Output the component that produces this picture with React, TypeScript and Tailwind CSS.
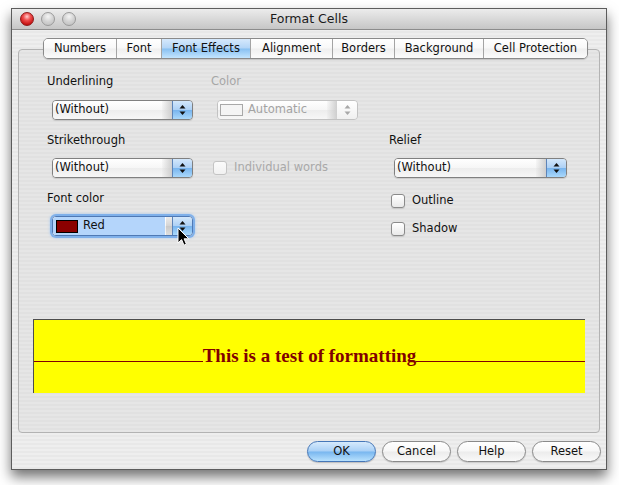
import React from "react";

function Arrows({ disabled }: { disabled?: boolean }) {
  const c = disabled ? "#a8a8a8" : "#111111";
  return (
    <svg width="7" height="12" viewBox="0 0 7 12">
      <path d="M3.5 1 L6.5 4.5 L0.5 4.5 Z" fill={c} />
      <path d="M3.5 11 L6.5 7.5 L0.5 7.5 Z" fill={c} />
    </svg>
  );
}

function Popup({
  className,
  children,
  disabled,
  focused,
}: {
  className: string;
  children: React.ReactNode;
  disabled?: boolean;
  focused?: boolean;
}) {
  return (
    <div
      className={`${className} flex h-[20px] rounded-[4px] border overflow-hidden ${
        disabled ? "border-[#c2c2c2]" : focused ? "border-[#4f79b4]" : "border-[#808080]"
      } ${
        focused
          ? "shadow-[0_0_0_2px_#7fb0ea,0_0_3px_2px_#a6c9f1]"
          : disabled
          ? ""
          : "shadow-[0_1px_1px_rgba(0,0,0,0.12)]"
      }`}
    >
      <div className="flex-1 min-w-0 flex items-center bg-[linear-gradient(to_bottom,#ffffff_0%,#f6f6f6_50%,#ededed_51%,#f7f7f7_100%)]">
        {children}
        <div
          className={`ml-auto h-full shrink-0 ${
            focused
              ? "w-[6px] bg-[linear-gradient(to_bottom,#ececec,#d4d4d4_50%,#c9c9c9_51%,#dedede)]"
              : "w-[10px] bg-[linear-gradient(to_right,rgba(225,225,225,0.2),rgba(200,200,200,0.85))]"
          }`}
        />
      </div>
      {disabled ? (
        <div className="w-[20px] flex items-center justify-center bg-[linear-gradient(to_bottom,#ffffff,#f0f0f0)]">
          <Arrows disabled />
        </div>
      ) : (
        <div className="w-[20px] flex items-center justify-center border-l border-[#5d84b8] bg-[linear-gradient(to_bottom,#d3e7fb_0%,#aed1f5_48%,#79b5ee_52%,#a9d8fb_100%)]">
          <Arrows />
        </div>
      )}
    </div>
  );
}

function Check({ label, disabled }: { label: string; disabled?: boolean }) {
  return (
    <div className="flex items-center h-[20px] gap-[7px]">
      <div
        className={`w-[14px] h-[14px] rounded-[3px] border ${
          disabled
            ? "border-[#c4c4c4] bg-[linear-gradient(to_bottom,#fbfbfb,#f1f1f1)]"
            : "border-[#8a8a8a] bg-[linear-gradient(to_bottom,#ffffff,#e9e9e9)] shadow-[0_1px_1px_rgba(0,0,0,0.12)]"
        }`}
      />
      <span className={disabled ? "text-[#a9a9a9]" : "text-[#111]"}>{label}</span>
    </div>
  );
}

function Label({ children, disabled }: { children: React.ReactNode; disabled?: boolean }) {
  return (
    <div className={`h-[18px] leading-[18px] ${disabled ? "text-[#a6a6a6]" : "text-[#111]"}`}>
      {children}
    </div>
  );
}

const tabs: { name: string; w: string; sel?: boolean }[] = [
  { name: "Numbers", w: "w-[72px]" },
  { name: "Font", w: "w-[45px]" },
  { name: "Font Effects", w: "w-[89px]", sel: true },
  { name: "Alignment", w: "w-[82px]" },
  { name: "Borders", w: "w-[62px]" },
  { name: "Background", w: "w-[89px]" },
  { name: "Cell Protection", w: "w-[104px]" },
];

function Button({ children, primary }: { children: React.ReactNode; primary?: boolean }) {
  return (
    <div
      className={`w-[69px] h-[21px] rounded-full border flex items-center justify-center text-[#111] ${
        primary
          ? "border-[#4677b8] bg-[linear-gradient(to_bottom,#d6eafc_0%,#a9d0f6_48%,#78b6ef_52%,#b8e1fd_100%)] shadow-[0_1px_1px_rgba(0,0,0,0.2)]"
          : "border-[#8a8a8a] bg-[linear-gradient(to_bottom,#ffffff_0%,#f7f7f7_48%,#ececec_52%,#f9f9f9_100%)] shadow-[0_1px_1px_rgba(0,0,0,0.15)]"
      }`}
    >
      {children}
    </div>
  );
}

export default function App() {
  return (
    <div className="w-[619px] h-[485px] bg-white pt-[8px] pl-[11px] font-['DejaVu_Sans',sans-serif] text-[11.5px] text-[#111]">
      <div className="w-[596px] h-[462px] border border-[#5c5c5c] flex flex-col shadow-[0_7px_12px_rgba(0,0,0,0.55)] bg-[repeating-linear-gradient(to_bottom,#eeeeee_0px,#eeeeee_2px,#e8e8e8_2px,#e8e8e8_4px)]">
        {/* Title bar */}
        <div className="h-[21px] shrink-0 grid grid-cols-[1fr_auto_1fr] items-center bg-[linear-gradient(to_bottom,#ececec,#c6c6c6)] border-b border-[#8c8c8c]">
          <div className="flex items-center gap-[7px] pl-[8px]">
            <div className="w-[14px] h-[14px] rounded-full border border-[#8e1a1a] bg-[radial-gradient(circle_at_50%_30%,#ffd0d0_0%,#f05050_35%,#c71414_75%,#a00c0c_100%)]" />
            <div className="w-[14px] h-[14px] rounded-full border border-[#9a9a9a] bg-[radial-gradient(circle_at_50%_30%,#f4f4f4_0%,#d2d2d2_50%,#bcbcbc_100%)]" />
            <div className="w-[14px] h-[14px] rounded-full border border-[#9a9a9a] bg-[radial-gradient(circle_at_50%_30%,#f4f4f4_0%,#d2d2d2_50%,#bcbcbc_100%)]" />
          </div>
          <div className="text-[12.5px] text-[#1a1a1a] pt-[1px]">Format Cells</div>
          <div />
        </div>

        {/* Body */}
        <div className="flex-1 flex flex-col px-[6px] pt-[8px]">
          {/* Tabs */}
          <div className="relative z-10 ml-[25px] flex h-[21px] w-fit rounded-[5px] border border-[#8a8a8a] overflow-hidden shadow-[0_1px_1px_rgba(0,0,0,0.15)]">
            {tabs.map((t, i) => (
              <div
                key={t.name}
                className={`${t.w} h-full flex items-center justify-center ${
                  i > 0 ? "border-l border-[#a4a4a4]" : ""
                } ${
                  t.sel
                    ? "bg-[linear-gradient(to_bottom,#d6e9fc_0%,#b3d5f7_48%,#88c0f1_52%,#c3e5fe_100%)]"
                    : "bg-[linear-gradient(to_bottom,#ffffff_0%,#f8f8f8_48%,#efefef_52%,#fbfbfb_100%)]"
                }`}
              >
                {t.name}
              </div>
            ))}
          </div>

          {/* Group box */}
          <div className="-mt-[10px] h-[384px] rounded-[4px] border border-[#b3b3b3] bg-[repeating-linear-gradient(to_bottom,#e6e6e6_0px,#e6e6e6_2px,#e1e1e1_2px,#e1e1e1_4px)] pt-[22px] flex flex-col">
            <div className="flex h-[247px]">
              {/* Left column */}
              <div className="w-[192px] pl-[28px] flex flex-col">
                <Label>Underlining</Label>
                <Popup className="mt-[10px] ml-[5px] w-[141px]">
                  <span className="pl-[2px]">(Without)</span>
                </Popup>
                <div className="mt-[11px]">
                  <Label>Strikethrough</Label>
                </div>
                <Popup className="mt-[9px] ml-[5px] w-[141px]">
                  <span className="pl-[2px]">(Without)</span>
                </Popup>
                <div className="mt-[11px]">
                  <Label>Font color</Label>
                </div>
                <div className="relative mt-[9px] ml-[5px] w-[141px]">
                  <Popup className="w-[141px]" focused>
                    <div className="flex shrink-0 items-center h-[18px] w-[112px] bg-[#b4d5fb]">
                      <div className="ml-[3px] w-[22px] h-[13px] border border-black bg-[#8b0000]" />
                      <span className="ml-[5px]">Red</span>
                    </div>
                  </Popup>
                  <svg
                    className="absolute left-[125px] top-[11px]"
                    width="13"
                    height="20"
                    viewBox="0 0 13 20"
                  >
                    <path
                      d="M1 1 L1 16 L4.6 12.6 L7 18.2 L9.4 17.2 L7.1 11.8 L11.8 11.8 Z"
                      fill="#000"
                      stroke="#fff"
                      strokeWidth="1"
                      strokeLinejoin="round"
                    />
                  </svg>
                </div>
              </div>

              {/* Middle column */}
              <div className="w-[178px] flex flex-col">
                <Label disabled>Color</Label>
                <Popup className="mt-[10px] ml-[6px] w-[141px]" disabled>
                  <div className="ml-[2px] shrink-0 w-[23px] h-[12px] border border-[#a8a8a8] bg-[#f4f4f4]" />
                  <span className="ml-[5px] text-[#a3a3a3]">Automatic</span>
                </Popup>
                <div className="mt-[38px] ml-[2px]">
                  <Check label="Individual words" disabled />
                </div>
              </div>

              {/* Right column */}
              <div className="flex flex-col pt-[59px]">
                <Label>Relief</Label>
                <Popup className="mt-[9px] ml-[5px] w-[173px]">
                  <span className="pl-[2px]">(Without)</span>
                </Popup>
                <div className="mt-[13px] ml-[2px]">
                  <Check label="Outline" />
                </div>
                <div className="mt-[8px] ml-[2px]">
                  <Check label="Shadow" />
                </div>
              </div>
            </div>

            {/* Preview */}
            <div className="ml-[14px] w-[552px] h-[74px] bg-[#ffff00] border-t border-l border-[#4d4d4d] flex items-baseline pt-[26px]">
              <div className="flex-1 border-b border-[#800000]" />
              <span className="font-['Liberation_Serif',serif] font-bold text-[19px] leading-[19px] text-[#800000]">
                This is a test of formatting
              </span>
              <div className="flex-1 border-b border-[#800000]" />
            </div>
          </div>

          {/* Buttons */}
          <div className="mt-[8px] -mr-[1px] flex justify-end gap-[6px]">
            <Button primary>OK</Button>
            <Button>Cancel</Button>
            <Button>Help</Button>
            <Button>Reset</Button>
          </div>
        </div>
      </div>
    </div>
  );
}
